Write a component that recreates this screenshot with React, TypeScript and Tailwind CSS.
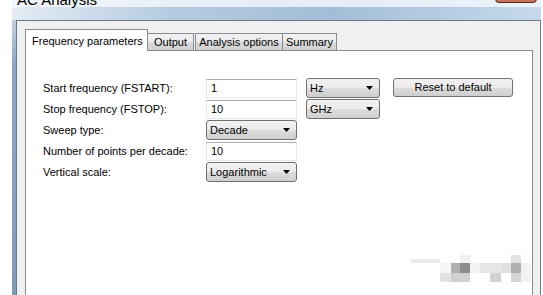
import React from "react";

const rows = [
  { label: "Start frequency (FSTART):", kind: "input", value: "1" },
  { label: "Stop frequency (FSTOP):", kind: "input", value: "10" },
  { label: "Sweep type:", kind: "combo", value: "Decade" },
  { label: "Number of points per decade:", kind: "input", value: "10" },
  { label: "Vertical scale:", kind: "combo", value: "Logarithmic" },
];

const noise = [
  { x: 411, y: 259, w: 29, h: 4, c: "#ebebeb" },
  { x: 440, y: 263, w: 11, h: 10, c: "#f5f5f5" },
  { x: 451, y: 263, w: 9, h: 10, c: "#b0b0b0" },
  { x: 460, y: 263, w: 10, h: 10, c: "#8c8c8c" },
  { x: 460, y: 255, w: 10, h: 8, c: "#f0f0f0" },
  { x: 440, y: 273, w: 11, h: 9, c: "#e3e3e3" },
  { x: 451, y: 273, w: 19, h: 9, c: "#d0d0d0" },
  { x: 470, y: 263, w: 10, h: 10, c: "#f3f3f3" },
  { x: 480, y: 263, w: 21, h: 10, c: "#e6e6e6" },
  { x: 490, y: 273, w: 11, h: 9, c: "#d2d2d2" },
  { x: 501, y: 263, w: 10, h: 10, c: "#e0e0e0" },
  { x: 511, y: 255, w: 10, h: 8, c: "#e3e3e3" },
  { x: 511, y: 263, w: 10, h: 10, c: "#b0b0b0" },
  { x: 511, y: 273, w: 10, h: 9, c: "#d6d6d6" },
  { x: 521, y: 263, w: 10, h: 19, c: "#f2f2f2" },
];

const tabs = [
  { t: "Output", cls: "-ml-px w-[47px]" },
  { t: "Analysis options", cls: "ml-[1px] w-[88px]" },
  { t: "Summary", cls: "-ml-px w-[55px]" },
];

function Arrow() {
  return (
    <svg width="7" height="4" viewBox="0 0 7 4">
      <path d="M0 0h7L3.5 4z" fill="#000" />
    </svg>
  );
}

function Combo({ value, className }: { value: string; className: string }) {
  return (
    <div
      className={`flex h-[20px] items-center justify-between rounded-[3px] border border-[#707070] bg-[linear-gradient(#f2f2f2,#ebebeb_50%,#dddddd_50%,#cfcfcf)] pl-[3px] pr-[6px] ${className}`}
    >
      <span>{value}</span>
      <Arrow />
    </div>
  );
}

function Field({ value }: { value: string }) {
  return (
    <div className="flex h-[19px] w-[91px] items-center border border-[#e3e9ef] border-t-[#abadb3] bg-white pl-[4px]">
      {value}
    </div>
  );
}

export default function App() {
  return (
    <div className="relative h-[295px] w-[543px] overflow-hidden bg-white font-['Liberation_Sans',Arial,sans-serif] text-[11px] text-black">
      <div className="relative ml-[12px] flex h-[320px] w-[529px] flex-col bg-[linear-gradient(#dbe5ef,#8ea8c3_20%,#7f9ab5)]">
        {/* title bar */}
        <div className="relative h-[20px] shrink-0 bg-[linear-gradient(to_right,#e4ecf4,#b5cbe0_30%,#a3bdd8_60%,#c6d9ec)]">
          <div className="absolute inset-x-0 top-0 h-[7px] bg-[#f6f9fc]/80" />
          <div className="relative -mt-[8px] whitespace-nowrap pl-[5px] text-[15px] leading-[16px]">AC Analysis</div>
          <div className="absolute left-[483px] top-[-15px] h-[18px] w-[42px] rounded-b-[4px] border border-[#5b2a20] bg-[#c9705a]" />
        </div>

        {/* dialog body */}
        <div className="ml-[4px] flex-1 border-l border-r border-t border-[#6a7a8c] bg-[#f0f0f0] pl-[8px] pr-[7px] pt-[8px]">
          <div className="relative z-10 flex h-[21px] items-end">
            <div className="flex h-[22px] w-[123px] translate-y-[1px] items-start whitespace-nowrap border border-b-0 border-[#898c95] bg-white pl-[6px] pt-[3px]">
              Frequency parameters
            </div>
            {tabs.map((tab) => (
              <div
                key={tab.t}
                className={`flex h-[17px] items-center justify-center whitespace-nowrap border border-b-0 border-[#898c95] bg-[linear-gradient(#f2f2f2,#ebebeb_50%,#dddddd_50%,#cfcfcf)] ${tab.cls}`}
              >
                {tab.t}
              </div>
            ))}
          </div>
          <div className="h-[260px] border border-[#898c95] bg-white pl-[17px] pt-[27px]">
            <div className="flex">
              <div className="flex flex-col gap-[1px]">
                {rows.map((r) => (
                  <div key={r.label} className="flex h-[20px] items-center">
                    <div className="w-[163px] whitespace-nowrap">{r.label}</div>
                    {r.kind === "input" ? (
                      <Field value={r.value} />
                    ) : (
                      <Combo value={r.value} className="w-[91px]" />
                    )}
                  </div>
                ))}
              </div>
              <div className="ml-[9px] flex flex-col gap-[1px]">
                <Combo value="Hz" className="w-[74px]" />
                <Combo value="GHz" className="w-[74px]" />
              </div>
              <div className="ml-[13px]">
                <div className="flex h-[19px] w-[120px] items-center justify-center whitespace-nowrap rounded-[3px] border border-[#707070] bg-[linear-gradient(#f2f2f2,#ebebeb_50%,#dddddd_50%,#cfcfcf)]">
                  Reset to default
                </div>
              </div>
            </div>
          </div>
        </div>
      </div>

      {/* blurred watermark */}
      {noise.map((n, i) => (
        <div
          key={i}
          className="absolute"
          style={{ left: n.x, top: n.y, width: n.w, height: n.h, background: n.c }}
        />
      ))}
    </div>
  );
}
